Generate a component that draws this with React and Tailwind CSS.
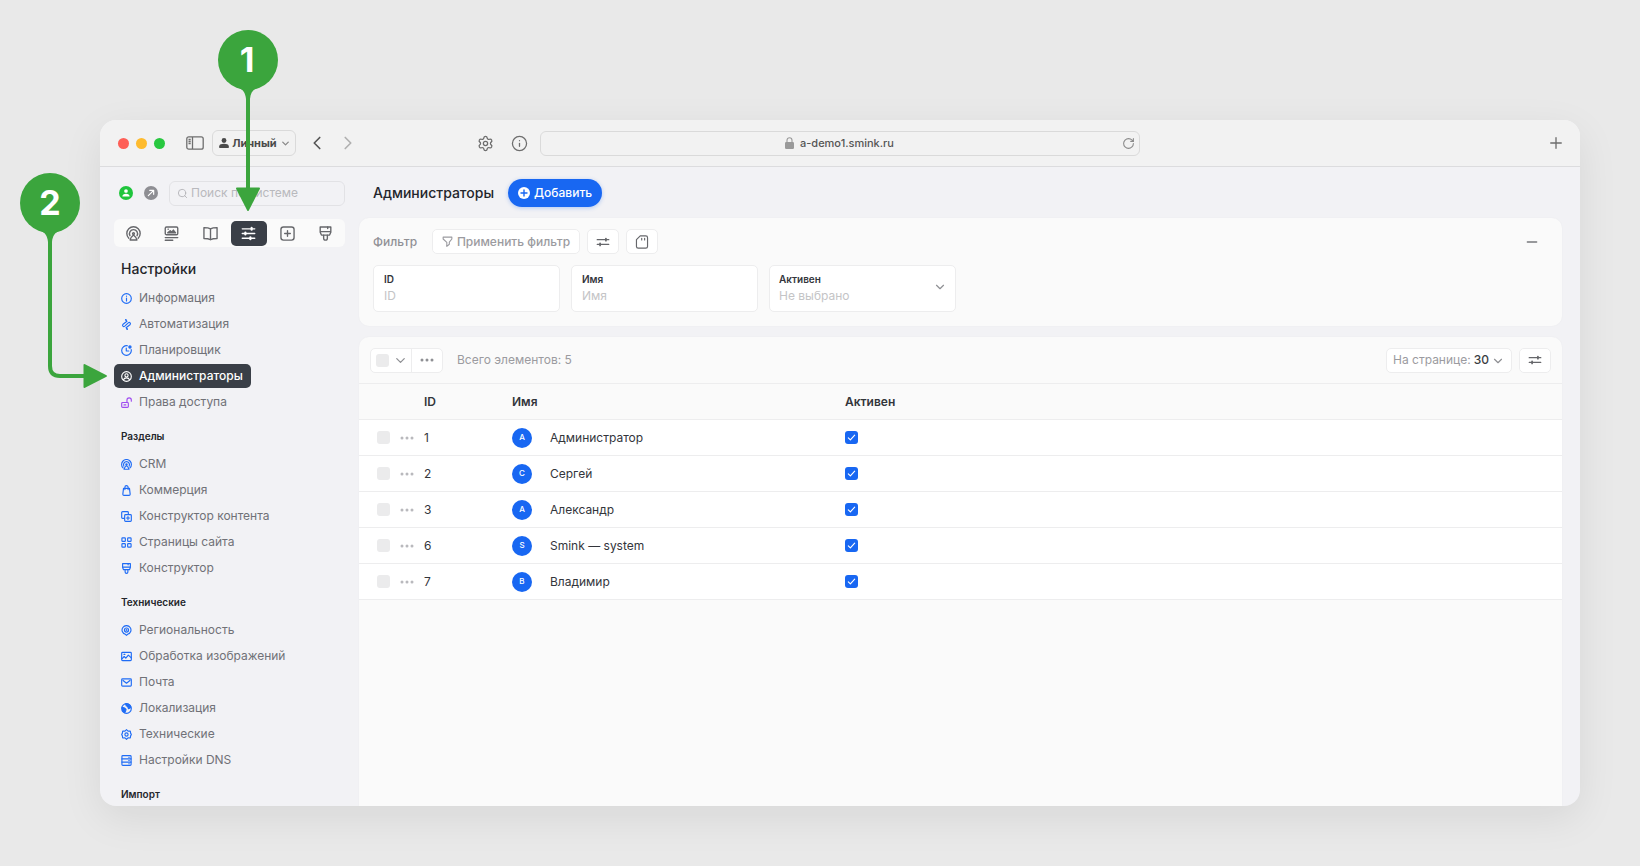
// src/App.jsx
import React from 'react';
import { ChevronDown, ChevronLeft, ChevronRight, Info, Minus, Plus, RotateCw, Search, Settings } from 'lucide-react';

const Icon = ({ className = 'size-3', strokeWidth = 2, children }) => (
  <svg
    viewBox="0 0 24 24"
    fill="none"
    stroke="currentColor"
    strokeWidth={strokeWidth}
    strokeLinecap="round"
    strokeLinejoin="round"
    className={`shrink-0 ${className}`}
    aria-hidden="true"
  >
    {children}
  </svg>
);

const InfoIcon = (props) => (
  <Icon {...props}>
    <circle cx="12" cy="12" r="10.5" />
    <path d="M12 11v6.5M12 6.5v.6" />
  </Icon>
);

const FlowIcon = (props) => (
  <Icon {...props}>
    <path d="M10.500 2 13 5 4.500 11.500c-3 3 .8 6.500 3.700 4L15.800 8.500c3-2.500 6.700 1 3.700 4L11 19l2.500 3" />
    <path d="M10.500 1.800v.1M13.500 22.200v-.1" strokeWidth="3.500" />
  </Icon>
);

const ClockIcon = (props) => (
  <Icon {...props}>
    <path d="M14 1.700A10.500 10.500 0 1 0 22.300 10" />
    <path d="M11.500 6.500V13H17" />
    <circle cx="19.500" cy="4.500" r="2.500" fill="currentColor" />
  </Icon>
);

const UserIcon = (props) => (
  <Icon {...props}>
    <circle cx="12" cy="12" r="10.500" />
    <circle cx="12" cy="9.500" r="3.500" />
    <path d="M5.500 19.500c.8-3.200 3.200-4.500 6.500-4.500s5.700 1.300 6.500 4.500" />
  </Icon>
);

const UnlockIcon = (props) => (
  <Icon {...props}>
    <rect x="1.500" y="12" width="14.500" height="10.500" rx="2" />
    <path d="M13 12V6.500a4.700 4.700 0 0 1 9.500 0V9M6.500 17.200h4" />
  </Icon>
);

const CrmIcon = (props) => (
  <Icon {...props}>
    <path d="M4.500 19.500a10.700 10.700 0 1 1 15 0" />
    <path d="M6.300 15.500a6.500 6.500 0 1 1 11.400 0" />
    <circle cx="12" cy="12" r="1.500" />
    <path d="M12 14.500c-2.500 2-4.500 4.500-5.500 7.800h11c-1-3.300-3-5.800-5.500-7.800z" />
  </Icon>
);

const BagIcon = (props) => (
  <Icon {...props}>
    <path d="M5.500 7.500h13l1.500 12.500a2.500 2.500 0 0 1-2.500 2.500h-11A2.500 2.500 0 0 1 4 20z" />
    <path d="M8.500 10V5a3.500 3.500 0 0 1 7 0v5" />
  </Icon>
);

const CopyPlusIcon = (props) => (
  <Icon {...props}>
    <path d="M7 16H3.500a2 2 0 0 1-2-2V3.500a2 2 0 0 1 2-2H14a2 2 0 0 1 2 2V7" />
    <rect x="8" y="8" width="14.500" height="14.500" rx="2" />
    <path d="M15.200 12v6.500M12 15.200h6.500" />
  </Icon>
);

const GridIcon = (props) => (
  <Icon {...props}>
    <rect x="2" y="2" width="7.500" height="7.500" rx="1.500" />
    <rect x="14.500" y="2" width="7.500" height="7.500" rx="1.500" />
    <rect x="2" y="14.500" width="7.500" height="7.500" rx="1.500" />
    <rect x="14.500" y="14.500" width="7.500" height="7.500" rx="1.500" />
  </Icon>
);

const BrushIcon = (props) => (
  <Icon {...props}>
    <path d="M3.500 1.500h17v8.500l-2 4.500h-13l-2-4.500zM3.500 9h17" />
    <path d="M9 14.500v5a3 3 0 0 0 6 0v-5M15.500 1.500V4" />
  </Icon>
);

const PinIcon = (props) => (
  <Icon {...props}>
    <path d="M12 22.500l-2.500-2.200a9.700 9.700 0 1 1 5 0z" />
    <circle cx="12" cy="11" r="4.500" />
    <circle cx="12" cy="11" r=".8" />
  </Icon>
);

const ImageIcon = (props) => (
  <Icon {...props}>
    <rect x="1.500" y="3" width="21" height="18" rx="2" />
    <path d="M2 17l5-5 3.500 3.500L16 9l6.500 6M6.500 7.500h2" />
  </Icon>
);

const MailIcon = (props) => (
  <Icon {...props}>
    <rect x="1.500" y="4" width="21" height="16" rx="2" />
    <path d="M4.500 7.500 12 13.500l7.500-6" />
  </Icon>
);

const GlobeIcon = (props) => (
  <Icon {...props}>
    <circle cx="12" cy="12" r="10.500" />
    <path d="M2.500 9.500 8 11l3 3-1 3.500-2 3.500-4-3zM10 2l1.500 4 3 1.500 2 5 4-2 1-1.500C20 4.500 15 1.500 10 2z" fill="currentColor" />
  </Icon>
);

const GearIcon = (props) => (
  <Icon {...props}>
    <path d="M12 1.500l3.300 3 5-.2.700 4.700L22.500 12 21 15l-.7 4.700-5-.2-3.300 3-3.300-3-5 .2L3 15l-1.500-3L3 9l.7-4.700 5 .2z" />
    <circle cx="12" cy="12" r="3.500" />
  </Icon>
);

const ServerIcon = (props) => (
  <Icon {...props}>
    <rect x="2" y="1.500" width="20" height="21" rx="2" />
    <path d="M2 8.500h20M2 15.500h20M17 5h1M17 12h1M17 19h1" />
  </Icon>
);

const NewsIcon = (props) => (
  <Icon {...props}>
    <rect x="2" y="1.500" width="20" height="12.500" rx="2" />
    <path d="M6 11l4-3.500 2.500 2.500 2.500-3.500 3.500 4.500zM6.500 5h.5" fill="currentColor" />
    <path d="M2 18.500h20M2 22.700h12" />
  </Icon>
);

const BookIcon = (props) => (
  <Icon {...props}>
    <path d="M12 4.500c-2.500-1.500-5.500-2-10.500-2v17.500c5 0 8 .5 10.500 2 2.500-1.500 5.500-2 10.500-2V2.500c-5 0-8 .5-10.500 2zM12 4.500V22" />
  </Icon>
);

const SlidersIcon = (props) => (
  <Icon {...props}>
    <path d="M2 4.500h20M2 12h20M2 19.500h20" />
    <path d="M17 3v3M7 10.500v3M15 18v3" strokeWidth="3.500" />
  </Icon>
);

const PlusBoxIcon = (props) => (
  <Icon {...props}>
    <rect x="1.500" y="1.500" width="21" height="21" rx="4" />
    <path d="M12 7.500v9M7.500 12h9" />
  </Icon>
);

const SettingsLinesIcon = (props) => (
  <Icon {...props}>
    <path d="M2 8h20M2 16h20" />
    <path d="M17 6.200v3.600M7 14.200v3.600" strokeWidth="3" />
  </Icon>
);

const FunnelIcon = (props) => (
  <Icon {...props}>
    <path d="M2.500 2.500h19v4l-5.500 7V18l-5.500 4.500v-8.500L2.500 6.500z" />
  </Icon>
);

const CardIcon = (props) => (
  <Icon {...props}>
    <path d="M9 1.500h9.500a3 3 0 0 1 3 3v15a3 3 0 0 1-3 3h-13a3 3 0 0 1-3-3V8z" />
    <path d="M11.500 5.500v3M16.500 5.500v3" />
  </Icon>
);

const DotsIcon = ({ className = '' }) => (
  <svg viewBox="0 0 14 4" fill="currentColor" className={`h-1 w-[14px] ${className}`} aria-hidden="true">
    <circle cx="2" cy="2" r="1.500" />
    <circle cx="7" cy="2" r="1.500" />
    <circle cx="12" cy="2" r="1.500" />
  </svg>
);

const tabs = [
  { label: 'CRM', icon: CrmIcon },
  { label: 'Контент', icon: NewsIcon },
  { label: 'Справочники', icon: BookIcon },
  { label: 'Настройки', icon: SlidersIcon, active: true },
  { label: 'Модули', icon: PlusBoxIcon },
  { label: 'Конструктор', icon: BrushIcon },
];

const settingsMenu = [
  { label: 'Информация', icon: InfoIcon },
  { label: 'Автоматизация', icon: FlowIcon },
  { label: 'Планировщик', icon: ClockIcon },
  { label: 'Администраторы', icon: UserIcon, active: true },
  { label: 'Права доступа', icon: UnlockIcon, color: 'text-[#a04df0]' },
];

const sectionsMenu = [
  { label: 'CRM', icon: CrmIcon },
  { label: 'Коммерция', icon: BagIcon },
  { label: 'Конструктор контента', icon: CopyPlusIcon },
  { label: 'Страницы сайта', icon: GridIcon },
  { label: 'Конструктор', icon: BrushIcon },
];

const technicalMenu = [
  { label: 'Региональность', icon: PinIcon },
  { label: 'Обработка изображений', icon: ImageIcon },
  { label: 'Почта', icon: MailIcon },
  { label: 'Локализация', icon: GlobeIcon },
  { label: 'Технические', icon: GearIcon },
  { label: 'Настройки DNS', icon: ServerIcon },
];

const admins = [
  { id: 1, letter: 'А', name: 'Администратор' },
  { id: 2, letter: 'С', name: 'Сергей' },
  { id: 3, letter: 'А', name: 'Александр' },
  { id: 6, letter: 'S', name: 'Smink — system' },
  { id: 7, letter: 'В', name: 'Владимир' },
];

const BrowserBar = () => (
  <header className="grid h-[47px] shrink-0 grid-cols-[440px_1fr_440px] items-center border-b border-[#dcdcde] bg-[#f2f2f2] text-[#6e6e6e]">
    <div className="flex items-center pr-3 pl-[18px]">
      <div className="flex gap-[7px]">
        <span className="size-[11px] rounded-full bg-[#fe5f57]" />
        <span className="size-[11px] rounded-full bg-[#febb2e]" />
        <span className="size-[11px] rounded-full bg-[#28c840]" />
      </div>
      <button type="button" aria-label="Боковая панель" className="ml-[21px]">
        <svg viewBox="0 0 18 14" fill="none" stroke="currentColor" strokeWidth="1.300" className="h-[14px] w-[18px]">
          <rect x=".8" y=".8" width="16.400" height="12.400" rx="2" />
          <path d="M6.500 1v12M2.500 3.500h2.200M2.500 5.500h2.200M2.500 7.500h2.200" />
        </svg>
      </button>
      <button
        type="button"
        className="ml-2 flex h-[26px] w-[84px] items-center justify-between rounded-md border border-[#dadada] pr-1 pl-[6px] text-[11px] font-bold text-[#4a4a4a]"
      >
        <svg viewBox="0 0 12 12" fill="currentColor" className="size-[10px]" aria-hidden="true">
          <circle cx="6" cy="3" r="2.900" />
          <path d="M.3 12V9.800C.3 8 3 7 6 7s5.700 1 5.700 2.800V12z" />
        </svg>
        Личный
        <ChevronDown className="size-[11px] text-[#8a8a8a]" strokeWidth={3} />
      </button>
      <button type="button" aria-label="Назад" className="ml-[10px]">
        <ChevronLeft className="size-[22px] text-[#555]" strokeWidth={1.8} />
      </button>
      <button type="button" aria-label="Вперёд" className="ml-[9px]">
        <ChevronRight className="size-[22px] text-[#b0b0b0]" strokeWidth={1.8} />
      </button>
      <button type="button" aria-label="Настройки сайта" className="ml-auto">
        <Settings className="size-[17px]" strokeWidth={1.8} />
      </button>
      <button type="button" aria-label="Сведения" className="ml-[17px]">
        <Info className="size-[17px]" strokeWidth={1.8} />
      </button>
    </div>
    <div className="flex h-[25px] items-center rounded-md border border-[#dadada] px-1">
      <span className="flex flex-1 items-center justify-center gap-[6px] pl-3 text-[11px] font-medium text-[#555]">
        <svg viewBox="0 0 9 12" className="h-3 w-[9px] text-[#9a9a9a]" aria-hidden="true">
          <rect x="0" y="5" width="9" height="7" rx="1.200" fill="currentColor" />
          <path d="M2 5.500V3.200a2.500 2.500 0 0 1 5 0v2.300" fill="none" stroke="currentColor" strokeWidth="1.100" />
        </svg>
        a-demo1.smink.ru
      </span>
      <button type="button" aria-label="Обновить">
        <RotateCw className="size-[13px] text-[#8a8a8a]" />
      </button>
    </div>
    <div className="flex justify-end pr-[15px]">
      <button type="button" aria-label="Новая вкладка">
        <Plus className="size-[18px]" strokeWidth={1.8} />
      </button>
    </div>
  </header>
);

const Menu = ({ items }) => (
  <ul className="flex flex-col items-start gap-[2px]">
    {items.map(({ label, icon: ItemIcon, color = 'text-[#1f6cf5]', active }) => (
      <li key={label}>
        <a
          href="#"
          className={`flex h-6 items-center gap-[7px] rounded-[5px] pr-2 pl-[7px] text-xs ${
            active ? 'bg-[#3a3f47] font-medium text-white' : 'text-[#707177]'
          }`}
        >
          <ItemIcon className={`size-[11px] ${active ? 'text-white' : color}`} strokeWidth={2.500} />
          {label}
        </a>
      </li>
    ))}
  </ul>
);

const Sidebar = () => (
  <aside className="w-[259px] shrink-0 overflow-hidden px-[14px]">
    <div className="flex h-[52px] items-center pl-[5px]">
      <button type="button" aria-label="Профиль" className="flex size-[14px] items-center justify-center rounded-full bg-[#1fc53c] text-white">
        <svg viewBox="0 0 10 10" fill="currentColor" className="size-[8px]" aria-hidden="true">
          <circle cx="5" cy="2.500" r="2.300" />
          <path d="M.5 9.500C.5 7.200 2.300 6 5 6s4.500 1.200 4.500 3.500z" />
        </svg>
      </button>
      <button type="button" aria-label="Открыть сайт" className="ml-[11px] flex size-[14px] items-center justify-center rounded-full bg-[#8e8e93] text-white">
        <Icon className="size-[8px]" strokeWidth={3.500}>
          <path d="M4 20 20 4M8 4h12v12" />
        </Icon>
      </button>
      <label className="ml-[11px] flex h-[25px] flex-1 items-center gap-[3px] rounded-md border border-[#e2e2e5] pl-[7px] text-[#b4b4b8]">
        <Search className="size-[11px] shrink-0" />
        <input
          type="search"
          aria-label="Поиск по системе"
          placeholder="Поиск по системе"
          className="w-full min-w-0 bg-transparent text-xs outline-none placeholder:text-[#b9b9bd]"
        />
      </label>
    </div>

    <nav className="grid h-7 grid-cols-6 items-center rounded-md bg-[#fafafa]">
      {tabs.map(({ label, icon: TabIcon, active }) => (
        <button
          key={label}
          type="button"
          aria-label={label}
          className={`mx-px flex h-[25px] items-center justify-center rounded-[5px] ${
            active ? 'bg-[#3a3f47] text-white' : 'text-[#66676b]'
          }`}
        >
          <TabIcon className="size-[15px]" strokeWidth={2.200} />
        </button>
      ))}
    </nav>

    <h2 className="mt-3 pl-[7px] text-sm leading-5 font-medium text-[#24262b]">Настройки</h2>
    <div className="mt-[7px]">
      <Menu items={settingsMenu} />
    </div>
    <h3 className="mt-[14px] mb-[8px] pl-[7px] text-[10px] leading-4 font-semibold text-[#24262b]">Разделы</h3>
    <Menu items={sectionsMenu} />
    <h3 className="mt-[14px] mb-[8px] pl-[7px] text-[10px] leading-4 font-semibold text-[#24262b]">Технические</h3>
    <Menu items={technicalMenu} />
    <h3 className="mt-[14px] pl-[7px] text-[10px] leading-4 font-semibold text-[#24262b]">Импорт</h3>
  </aside>
);

const FilterInput = ({ id, label }) => (
  <div className="flex h-[47px] w-[187px] flex-col justify-center rounded-[5px] border border-[#ededee] bg-white px-[10px]">
    <label htmlFor={id} className="text-[10px] leading-[14px] font-semibold text-[#33353b]">{label}</label>
    <input
      id={id}
      type="text"
      placeholder={label}
      className="w-full bg-transparent text-xs leading-5 outline-none placeholder:text-[#c4c4c6]"
    />
  </div>
);

const outlineButton = 'flex h-[25px] items-center justify-center rounded-[5px] border border-[#ededee] bg-white';

const FilterPanel = () => (
  <section className="rounded-[10px] bg-[#fafafa] px-[14px] pt-[11px] pb-[14px] shadow-[0_0_2px_rgba(0,0,0,0.04)]">
    <div className="flex items-center">
      <h2 className="w-[59px] text-xs font-medium text-[#909095]">Фильтр</h2>
      <button type="button" className={`${outlineButton} w-[148px] gap-1 text-xs font-medium text-[#9b9ba0]`}>
        <FunnelIcon className="size-[11px]" strokeWidth={2.400} />
        Применить фильтр
      </button>
      <button type="button" aria-label="Настроить фильтр" className={`${outlineButton} ml-[7px] w-8 text-[#66676b]`}>
        <SettingsLinesIcon className="size-[14px]" />
      </button>
      <button type="button" aria-label="Сохранить фильтр" className={`${outlineButton} ml-[7px] w-8 text-[#66676b]`}>
        <CardIcon className="size-[14px]" />
      </button>
      <button type="button" aria-label="Свернуть фильтр" className="mr-2 ml-auto">
        <Minus className="size-4 text-[#77787c]" />
      </button>
    </div>
    <div className="mt-[11px] flex flex-wrap gap-[11px]">
      <FilterInput id="filter-id" label="ID" />
      <FilterInput id="filter-name" label="Имя" />
      <div className="relative flex h-[47px] w-[187px] flex-col justify-center rounded-[5px] border border-[#ededee] bg-white px-[9px]">
        <label htmlFor="filter-active" className="text-[10px] leading-[14px] font-semibold text-[#33353b]">Активен</label>
        <select id="filter-active" className="w-full appearance-none bg-transparent text-xs leading-5 text-[#c4c4c6] outline-none">
          <option>Не выбрано</option>
          <option>Да</option>
          <option>Нет</option>
        </select>
        <ChevronDown className="pointer-events-none absolute top-[14px] right-2 size-[14px] text-[#8f9094]" />
      </div>
    </div>
  </section>
);

const emptyCheckbox = 'block size-[13px] shrink-0 appearance-none rounded-[3px] bg-[#ebebec] checked:bg-[#1867f2]';

const ListPanel = () => (
  <section className="mt-[11px] flex-1 overflow-hidden rounded-t-[10px] bg-[#fafafa] shadow-[0_0_2px_rgba(0,0,0,0.04)]">
    <div className="flex h-[46px] items-center px-[11px]">
      <div className="flex h-[25px] items-center rounded-[5px] border border-[#ededee] bg-white">
        <div className="flex h-full w-[41px] items-center gap-1 border-r border-[#ededee] pl-[5px]">
          <input type="checkbox" aria-label="Выбрать все" className={emptyCheckbox} />
          <button type="button" aria-label="Варианты выбора">
            <ChevronDown className="size-[15px] text-[#8f9094]" />
          </button>
        </div>
        <button type="button" aria-label="Действия" className="flex w-[30px] justify-center text-[#8f9094]">
          <DotsIcon />
        </button>
      </div>
      <p className="ml-[14px] text-xs text-[#9b9ba0]">Всего элементов: 5</p>
      <div className="relative ml-auto flex h-[25px] w-[126px] items-center rounded-[5px] border border-[#ededee] bg-white pl-[6px] text-xs">
        <label htmlFor="per-page" className="text-[#9b9ba0]">На странице:</label>
        <select id="per-page" className="ml-[3px] flex-1 appearance-none bg-transparent font-medium text-[#3c3e44] outline-none">
          <option>30</option>
          <option>50</option>
          <option>100</option>
        </select>
        <ChevronDown className="pointer-events-none absolute top-[5px] right-[6px] size-[14px] text-[#8f9094]" />
      </div>
      <button type="button" aria-label="Настроить колонки" className={`${outlineButton} ml-[7px] w-8 text-[#66676b]`}>
        <SettingsLinesIcon className="size-[14px]" />
      </button>
    </div>

    <table className="w-full table-fixed border-collapse text-left text-xs text-[#33353b]">
      <thead>
        <tr className="h-9 border-y border-[#ededee]">
          <th className="w-[65px]" aria-label="Выбор" />
          <th className="w-[88px] font-semibold">ID</th>
          <th className="w-[333px] font-semibold">Имя</th>
          <th className="font-semibold">Активен</th>
        </tr>
      </thead>
      <tbody>
        {admins.map((admin) => (
          <tr key={admin.id} className="h-9 border-b border-[#ededee] bg-white">
            <td>
              <div className="flex items-center gap-[10px] pl-[18px]">
                <input type="checkbox" aria-label={`Выбрать: ${admin.name}`} className={emptyCheckbox} />
                <button type="button" aria-label="Действия" className="text-[#b9b9bd]">
                  <DotsIcon className="block" />
                </button>
              </div>
            </td>
            <td>{admin.id}</td>
            <td>
              <div className="flex items-center gap-[18px]">
                <span className="flex size-5 items-center justify-center rounded-full bg-[#1867f2] text-[8px] font-medium text-white">
                  {admin.letter}
                </span>
                {admin.name}
              </div>
            </td>
            <td>
              <label className="relative block size-[13px]">
                <input
                  type="checkbox"
                  defaultChecked
                  aria-label={`Активен: ${admin.name}`}
                  className="block size-[13px] appearance-none rounded-[3px] bg-[#ebebec] checked:bg-[#1867f2]"
                />
                <Icon className="pointer-events-none absolute inset-[2px] size-[9px] text-white" strokeWidth={3}>
                  <path d="M3.500 13l5.500 5.500 11.500-13" />
                </Icon>
              </label>
            </td>
          </tr>
        ))}
      </tbody>
    </table>
  </section>
);

// Numbered pointers laid over the window
const Callouts = () => (
  <svg
    width="280"
    height="420"
    viewBox="0 0 280 420"
    className="pointer-events-none absolute top-0 left-0 font-['Inter',sans-serif] text-[34px] font-bold"
  >
    <g fill="#3ba53d">
      <circle cx="248" cy="60" r="30" />
      <path d="M237 87c6 2 8.500 6 9 12h4c.5-6 3-10 9-12z" />
      <path d="M248 90v100" stroke="#3ba53d" strokeWidth="4" />
      <path d="M237 187.500h22q1.500 0 .8 1.500l-11 21.500q-.8 1.200-1.600 0l-11-21.500q-.7-1.500.8-1.500z" />
      <circle cx="50" cy="203" r="30" />
      <path d="M39 230c6 2 8.500 6 9 12h4c.5-6 3-10 9-12z" />
      <path d="M50 233v133q0 10 10 10h26" fill="none" stroke="#3ba53d" strokeWidth="4" />
      <path d="M83.500 365v22q0 1.500 1.500.8l21.500-11q1.200-.8 0-1.600L85 364.200q-1.500-.7-1.500.8z" />
    </g>
    <g fill="#fff" textAnchor="middle">
      <text x="247" y="72">1</text>
      <text x="50" y="215">2</text>
    </g>
  </svg>
);

const App = () => (
  <div className="relative flex h-screen flex-col bg-[#e9e9e9] pt-[120px] pr-[60px] pb-[60px] pl-[100px] font-['Inter','Noto_Sans',sans-serif]">
    <div className="flex min-h-0 flex-1 flex-col overflow-hidden rounded-2xl bg-[#f2f2f5] shadow-[0_12px_40px_rgba(0,0,0,0.08)]">
      <BrowserBar />
      <div className="flex min-h-0 flex-1">
        <Sidebar />
        <main className="flex min-w-0 flex-1 flex-col pr-[18px]">
          <div className="flex h-[51px] shrink-0 items-center pl-[14px]">
            <h1 className="text-sm font-medium text-[#24262b]">Администраторы</h1>
            <button
              type="button"
              className="ml-[14px] flex h-7 items-center gap-1 rounded-full bg-[#1867f2] px-[10px] text-xs font-medium text-white shadow-[0_1px_4px_rgba(24,103,242,0.3)]"
            >
              <svg viewBox="0 0 12 12" className="size-3" aria-hidden="true">
                <circle cx="6" cy="6" r="6" fill="#fff" />
                <path d="M6 3v6M3 6h6" stroke="#1867f2" strokeWidth="1.400" strokeLinecap="round" />
              </svg>
              Добавить
            </button>
          </div>
          <FilterPanel />
          <ListPanel />
        </main>
      </div>
    </div>
    <Callouts />
  </div>
);

export default App;
